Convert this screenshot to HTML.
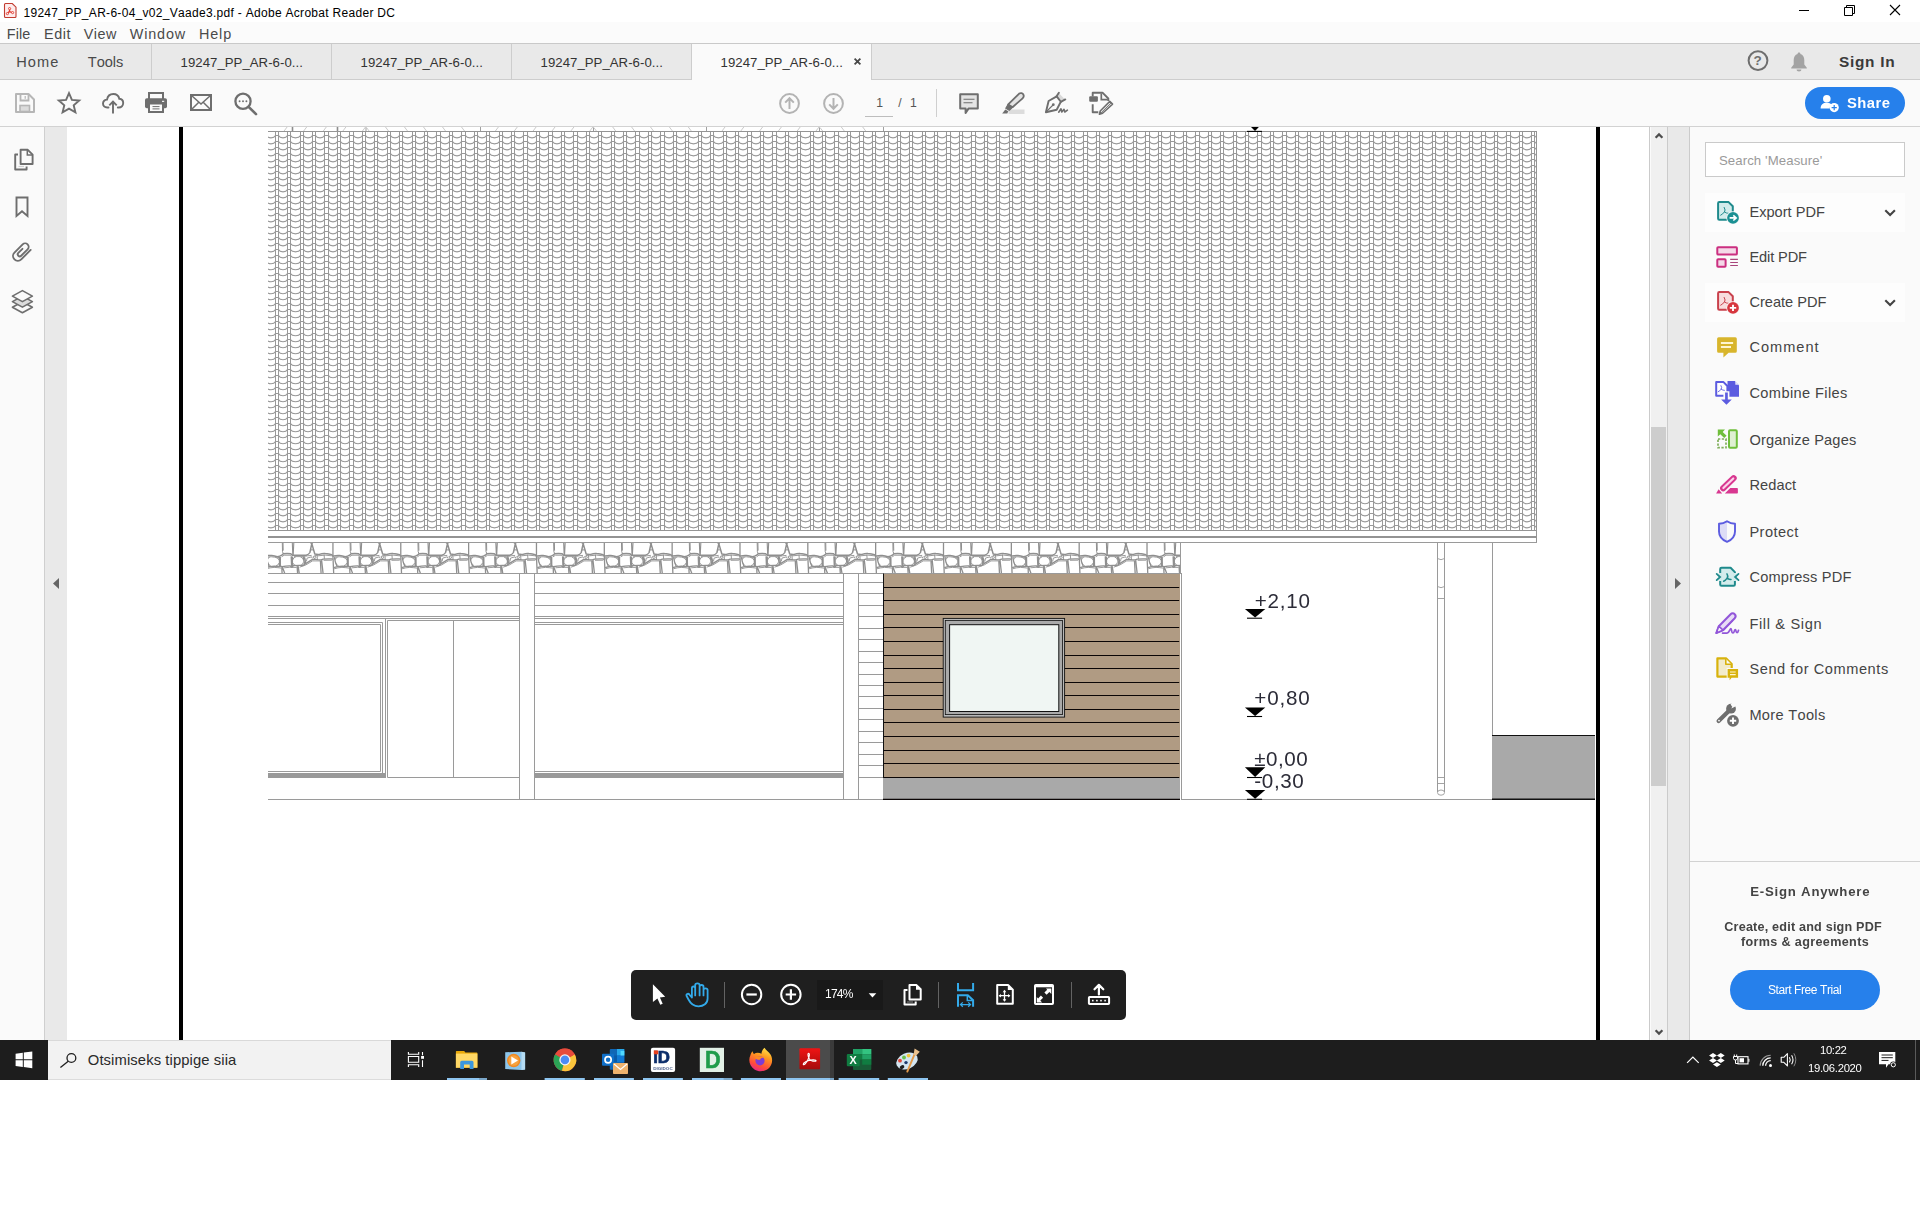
<!DOCTYPE html>
<html lang="en"><head><meta charset="utf-8"><title>19247_PP_AR-6-04_v02_Vaade3.pdf - Adobe Acrobat Reader DC</title><style>
html,body{margin:0;padding:0}
body{width:1920px;height:1210px;position:relative;overflow:hidden;background:#fff;font-family:"Liberation Sans", sans-serif;font-kerning:none}
.a{position:absolute;display:block}
.t{position:absolute;white-space:pre;line-height:1;display:block}
svg{overflow:visible}
</style></head><body>
<div class="a" style="left:0px;top:127px;width:44px;height:913px;background:#fafafa;"></div>
<div class="a" style="left:44px;top:127px;width:1px;height:913px;background:#cfcfcf;"></div>
<div class="a" style="left:45px;top:127px;width:22px;height:913px;background:#e9e9e9;"></div>
<div class="a" style="left:179px;top:127px;width:4px;height:913px;background:#000;"></div>
<div class="a" style="left:1596px;top:127px;width:4px;height:913px;background:#000;"></div>
<svg class="a" style="left:0;top:0" width="1920" height="1210" viewBox="0 0 1920 1210"><defs><g id="r49"><path d="M0 4.3h4M0 10.3h4M0 16.3h4M0 22.3h4M0 28.3h4M0 34.3h4M0 40.3h4M0 46.3h4M0 52.3h4M0 58.3h4M0 64.3h4M0 70.3h4M0 76.3h4M0 82.3h4M0 88.3h4M0 94.3h4M0 100.3h4M0 106.3h4M0 112.3h4M0 118.3h4M0 124.3h4M0 130.3h4M0 136.3h4M0 142.3h4M0 148.3h4M0 154.3h4M0 160.3h4M0 166.3h4M0 172.3h4M0 178.3h4M0 184.3h4M0 190.3h4M0 196.3h4M0 202.3h4M0 208.3h4M0 214.3h4M0 220.3h4M0 226.3h4M0 232.3h4M0 238.3h4M0 244.3h4M0 250.3h4M0 256.3h4M0 262.3h4M0 268.3h4M0 274.3h4M0 280.3h4M0 286.3h4M0 292.3h4M0 298.3h4M0 304.3h4M0 310.3h4M0 316.3h4M0 322.3h4M0 328.3h4M0 334.3h4M0 340.3h4M0 346.3h4M0 352.3h4M0 358.3h4M0 364.3h4M0 370.3h4M0 376.3h4M0 382.3h4M0 388.3h4M0 394.3h4"/><path stroke-width="1.05" d="M4 4.4c1.53 3 7.47 3 9 0M4 10.4c1.53 3 7.47 3 9 0M4 16.4c1.53 3 7.47 3 9 0M4 22.4c1.53 3 7.47 3 9 0M4 28.4c1.53 3 7.47 3 9 0M4 34.4c1.53 3 7.47 3 9 0M4 40.4c1.53 3 7.47 3 9 0M4 46.4c1.53 3 7.47 3 9 0M4 52.4c1.53 3 7.47 3 9 0M4 58.4c1.53 3 7.47 3 9 0M4 64.4c1.53 3 7.47 3 9 0M4 70.4c1.53 3 7.47 3 9 0M4 76.4c1.53 3 7.47 3 9 0M4 82.4c1.53 3 7.47 3 9 0M4 88.4c1.53 3 7.47 3 9 0M4 94.4c1.53 3 7.47 3 9 0M4 100.4c1.53 3 7.47 3 9 0M4 106.4c1.53 3 7.47 3 9 0M4 112.4c1.53 3 7.47 3 9 0M4 118.4c1.53 3 7.47 3 9 0M4 124.4c1.53 3 7.47 3 9 0M4 130.4c1.53 3 7.47 3 9 0M4 136.4c1.53 3 7.47 3 9 0M4 142.4c1.53 3 7.47 3 9 0M4 148.4c1.53 3 7.47 3 9 0M4 154.4c1.53 3 7.47 3 9 0M4 160.4c1.53 3 7.47 3 9 0M4 166.4c1.53 3 7.47 3 9 0M4 172.4c1.53 3 7.47 3 9 0M4 178.4c1.53 3 7.47 3 9 0M4 184.4c1.53 3 7.47 3 9 0M4 190.4c1.53 3 7.47 3 9 0M4 196.4c1.53 3 7.47 3 9 0M4 202.4c1.53 3 7.47 3 9 0M4 208.4c1.53 3 7.47 3 9 0M4 214.4c1.53 3 7.47 3 9 0M4 220.4c1.53 3 7.47 3 9 0M4 226.4c1.53 3 7.47 3 9 0M4 232.4c1.53 3 7.47 3 9 0M4 238.4c1.53 3 7.47 3 9 0M4 244.4c1.53 3 7.47 3 9 0M4 250.4c1.53 3 7.47 3 9 0M4 256.4c1.53 3 7.47 3 9 0M4 262.4c1.53 3 7.47 3 9 0M4 268.4c1.53 3 7.47 3 9 0M4 274.4c1.53 3 7.47 3 9 0M4 280.4c1.53 3 7.47 3 9 0M4 286.4c1.53 3 7.47 3 9 0M4 292.4c1.53 3 7.47 3 9 0M4 298.4c1.53 3 7.47 3 9 0M4 304.4c1.53 3 7.47 3 9 0M4 310.4c1.53 3 7.47 3 9 0M4 316.4c1.53 3 7.47 3 9 0M4 322.4c1.53 3 7.47 3 9 0M4 328.4c1.53 3 7.47 3 9 0M4 334.4c1.53 3 7.47 3 9 0M4 340.4c1.53 3 7.47 3 9 0M4 346.4c1.53 3 7.47 3 9 0M4 352.4c1.53 3 7.47 3 9 0M4 358.4c1.53 3 7.47 3 9 0M4 364.4c1.53 3 7.47 3 9 0M4 370.4c1.53 3 7.47 3 9 0M4 376.4c1.53 3 7.47 3 9 0M4 382.4c1.53 3 7.47 3 9 0M4 388.4c1.53 3 7.47 3 9 0M4 394.4c1.53 3 7.47 3 9 0"/></g><g id="r39"><path d="M0 4.3h3M0 10.3h3M0 16.3h3M0 22.3h3M0 28.3h3M0 34.3h3M0 40.3h3M0 46.3h3M0 52.3h3M0 58.3h3M0 64.3h3M0 70.3h3M0 76.3h3M0 82.3h3M0 88.3h3M0 94.3h3M0 100.3h3M0 106.3h3M0 112.3h3M0 118.3h3M0 124.3h3M0 130.3h3M0 136.3h3M0 142.3h3M0 148.3h3M0 154.3h3M0 160.3h3M0 166.3h3M0 172.3h3M0 178.3h3M0 184.3h3M0 190.3h3M0 196.3h3M0 202.3h3M0 208.3h3M0 214.3h3M0 220.3h3M0 226.3h3M0 232.3h3M0 238.3h3M0 244.3h3M0 250.3h3M0 256.3h3M0 262.3h3M0 268.3h3M0 274.3h3M0 280.3h3M0 286.3h3M0 292.3h3M0 298.3h3M0 304.3h3M0 310.3h3M0 316.3h3M0 322.3h3M0 328.3h3M0 334.3h3M0 340.3h3M0 346.3h3M0 352.3h3M0 358.3h3M0 364.3h3M0 370.3h3M0 376.3h3M0 382.3h3M0 388.3h3M0 394.3h3"/><path stroke-width="1.05" d="M3 4.4c1.53 3 7.47 3 9 0M3 10.4c1.53 3 7.47 3 9 0M3 16.4c1.53 3 7.47 3 9 0M3 22.4c1.53 3 7.47 3 9 0M3 28.4c1.53 3 7.47 3 9 0M3 34.4c1.53 3 7.47 3 9 0M3 40.4c1.53 3 7.47 3 9 0M3 46.4c1.53 3 7.47 3 9 0M3 52.4c1.53 3 7.47 3 9 0M3 58.4c1.53 3 7.47 3 9 0M3 64.4c1.53 3 7.47 3 9 0M3 70.4c1.53 3 7.47 3 9 0M3 76.4c1.53 3 7.47 3 9 0M3 82.4c1.53 3 7.47 3 9 0M3 88.4c1.53 3 7.47 3 9 0M3 94.4c1.53 3 7.47 3 9 0M3 100.4c1.53 3 7.47 3 9 0M3 106.4c1.53 3 7.47 3 9 0M3 112.4c1.53 3 7.47 3 9 0M3 118.4c1.53 3 7.47 3 9 0M3 124.4c1.53 3 7.47 3 9 0M3 130.4c1.53 3 7.47 3 9 0M3 136.4c1.53 3 7.47 3 9 0M3 142.4c1.53 3 7.47 3 9 0M3 148.4c1.53 3 7.47 3 9 0M3 154.4c1.53 3 7.47 3 9 0M3 160.4c1.53 3 7.47 3 9 0M3 166.4c1.53 3 7.47 3 9 0M3 172.4c1.53 3 7.47 3 9 0M3 178.4c1.53 3 7.47 3 9 0M3 184.4c1.53 3 7.47 3 9 0M3 190.4c1.53 3 7.47 3 9 0M3 196.4c1.53 3 7.47 3 9 0M3 202.4c1.53 3 7.47 3 9 0M3 208.4c1.53 3 7.47 3 9 0M3 214.4c1.53 3 7.47 3 9 0M3 220.4c1.53 3 7.47 3 9 0M3 226.4c1.53 3 7.47 3 9 0M3 232.4c1.53 3 7.47 3 9 0M3 238.4c1.53 3 7.47 3 9 0M3 244.4c1.53 3 7.47 3 9 0M3 250.4c1.53 3 7.47 3 9 0M3 256.4c1.53 3 7.47 3 9 0M3 262.4c1.53 3 7.47 3 9 0M3 268.4c1.53 3 7.47 3 9 0M3 274.4c1.53 3 7.47 3 9 0M3 280.4c1.53 3 7.47 3 9 0M3 286.4c1.53 3 7.47 3 9 0M3 292.4c1.53 3 7.47 3 9 0M3 298.4c1.53 3 7.47 3 9 0M3 304.4c1.53 3 7.47 3 9 0M3 310.4c1.53 3 7.47 3 9 0M3 316.4c1.53 3 7.47 3 9 0M3 322.4c1.53 3 7.47 3 9 0M3 328.4c1.53 3 7.47 3 9 0M3 334.4c1.53 3 7.47 3 9 0M3 340.4c1.53 3 7.47 3 9 0M3 346.4c1.53 3 7.47 3 9 0M3 352.4c1.53 3 7.47 3 9 0M3 358.4c1.53 3 7.47 3 9 0M3 364.4c1.53 3 7.47 3 9 0M3 370.4c1.53 3 7.47 3 9 0M3 376.4c1.53 3 7.47 3 9 0M3 382.4c1.53 3 7.47 3 9 0M3 388.4c1.53 3 7.47 3 9 0M3 394.4c1.53 3 7.47 3 9 0"/></g><g id="r310"><path d="M0 4.3h3M0 10.3h3M0 16.3h3M0 22.3h3M0 28.3h3M0 34.3h3M0 40.3h3M0 46.3h3M0 52.3h3M0 58.3h3M0 64.3h3M0 70.3h3M0 76.3h3M0 82.3h3M0 88.3h3M0 94.3h3M0 100.3h3M0 106.3h3M0 112.3h3M0 118.3h3M0 124.3h3M0 130.3h3M0 136.3h3M0 142.3h3M0 148.3h3M0 154.3h3M0 160.3h3M0 166.3h3M0 172.3h3M0 178.3h3M0 184.3h3M0 190.3h3M0 196.3h3M0 202.3h3M0 208.3h3M0 214.3h3M0 220.3h3M0 226.3h3M0 232.3h3M0 238.3h3M0 244.3h3M0 250.3h3M0 256.3h3M0 262.3h3M0 268.3h3M0 274.3h3M0 280.3h3M0 286.3h3M0 292.3h3M0 298.3h3M0 304.3h3M0 310.3h3M0 316.3h3M0 322.3h3M0 328.3h3M0 334.3h3M0 340.3h3M0 346.3h3M0 352.3h3M0 358.3h3M0 364.3h3M0 370.3h3M0 376.3h3M0 382.3h3M0 388.3h3M0 394.3h3"/><path stroke-width="1.05" d="M3 4.4c1.7 3 8.3 3 10 0M3 10.4c1.7 3 8.3 3 10 0M3 16.4c1.7 3 8.3 3 10 0M3 22.4c1.7 3 8.3 3 10 0M3 28.4c1.7 3 8.3 3 10 0M3 34.4c1.7 3 8.3 3 10 0M3 40.4c1.7 3 8.3 3 10 0M3 46.4c1.7 3 8.3 3 10 0M3 52.4c1.7 3 8.3 3 10 0M3 58.4c1.7 3 8.3 3 10 0M3 64.4c1.7 3 8.3 3 10 0M3 70.4c1.7 3 8.3 3 10 0M3 76.4c1.7 3 8.3 3 10 0M3 82.4c1.7 3 8.3 3 10 0M3 88.4c1.7 3 8.3 3 10 0M3 94.4c1.7 3 8.3 3 10 0M3 100.4c1.7 3 8.3 3 10 0M3 106.4c1.7 3 8.3 3 10 0M3 112.4c1.7 3 8.3 3 10 0M3 118.4c1.7 3 8.3 3 10 0M3 124.4c1.7 3 8.3 3 10 0M3 130.4c1.7 3 8.3 3 10 0M3 136.4c1.7 3 8.3 3 10 0M3 142.4c1.7 3 8.3 3 10 0M3 148.4c1.7 3 8.3 3 10 0M3 154.4c1.7 3 8.3 3 10 0M3 160.4c1.7 3 8.3 3 10 0M3 166.4c1.7 3 8.3 3 10 0M3 172.4c1.7 3 8.3 3 10 0M3 178.4c1.7 3 8.3 3 10 0M3 184.4c1.7 3 8.3 3 10 0M3 190.4c1.7 3 8.3 3 10 0M3 196.4c1.7 3 8.3 3 10 0M3 202.4c1.7 3 8.3 3 10 0M3 208.4c1.7 3 8.3 3 10 0M3 214.4c1.7 3 8.3 3 10 0M3 220.4c1.7 3 8.3 3 10 0M3 226.4c1.7 3 8.3 3 10 0M3 232.4c1.7 3 8.3 3 10 0M3 238.4c1.7 3 8.3 3 10 0M3 244.4c1.7 3 8.3 3 10 0M3 250.4c1.7 3 8.3 3 10 0M3 256.4c1.7 3 8.3 3 10 0M3 262.4c1.7 3 8.3 3 10 0M3 268.4c1.7 3 8.3 3 10 0M3 274.4c1.7 3 8.3 3 10 0M3 280.4c1.7 3 8.3 3 10 0M3 286.4c1.7 3 8.3 3 10 0M3 292.4c1.7 3 8.3 3 10 0M3 298.4c1.7 3 8.3 3 10 0M3 304.4c1.7 3 8.3 3 10 0M3 310.4c1.7 3 8.3 3 10 0M3 316.4c1.7 3 8.3 3 10 0M3 322.4c1.7 3 8.3 3 10 0M3 328.4c1.7 3 8.3 3 10 0M3 334.4c1.7 3 8.3 3 10 0M3 340.4c1.7 3 8.3 3 10 0M3 346.4c1.7 3 8.3 3 10 0M3 352.4c1.7 3 8.3 3 10 0M3 358.4c1.7 3 8.3 3 10 0M3 364.4c1.7 3 8.3 3 10 0M3 370.4c1.7 3 8.3 3 10 0M3 376.4c1.7 3 8.3 3 10 0M3 382.4c1.7 3 8.3 3 10 0M3 388.4c1.7 3 8.3 3 10 0M3 394.4c1.7 3 8.3 3 10 0"/></g><clipPath id="rclip"><rect x="268.0" y="130.7" width="1268.8" height="400.2"/></clipPath></defs>
<g clip-path="url(#rclip)" fill="none" stroke="#999" stroke-width="1">
<path d="M262.5 131.2v399.2M266.5 131.2v399.2M275.5 131.2v399.2M278.5 131.2v399.2M287.5 131.2v399.2M290.5 131.2v399.2M300.5 131.2v399.2M303.5 131.2v399.2M312.5 131.2v399.2M315.5 131.2v399.2M324.5 131.2v399.2M328.5 131.2v399.2M337.5 131.2v399.2M340.5 131.2v399.2M349.5 131.2v399.2M353.5 131.2v399.2M362.5 131.2v399.2M365.5 131.2v399.2M374.5 131.2v399.2M377.5 131.2v399.2M387.5 131.2v399.2M390.5 131.2v399.2M399.5 131.2v399.2M402.5 131.2v399.2M412.5 131.2v399.2M415.5 131.2v399.2M424.5 131.2v399.2M427.5 131.2v399.2M436.5 131.2v399.2M440.5 131.2v399.2M449.5 131.2v399.2M452.5 131.2v399.2M461.5 131.2v399.2M465.5 131.2v399.2M474.5 131.2v399.2M477.5 131.2v399.2M486.5 131.2v399.2M489.5 131.2v399.2M499.5 131.2v399.2M502.5 131.2v399.2M511.5 131.2v399.2M514.5 131.2v399.2M523.5 131.2v399.2M527.5 131.2v399.2M536.5 131.2v399.2M539.5 131.2v399.2M548.5 131.2v399.2M552.5 131.2v399.2M561.5 131.2v399.2M564.5 131.2v399.2M573.5 131.2v399.2M577.5 131.2v399.2M586.5 131.2v399.2M589.5 131.2v399.2M598.5 131.2v399.2M601.5 131.2v399.2M611.5 131.2v399.2M614.5 131.2v399.2M623.5 131.2v399.2M626.5 131.2v399.2M635.5 131.2v399.2M639.5 131.2v399.2M648.5 131.2v399.2M651.5 131.2v399.2M660.5 131.2v399.2M664.5 131.2v399.2M673.5 131.2v399.2M676.5 131.2v399.2M685.5 131.2v399.2M688.5 131.2v399.2M698.5 131.2v399.2M701.5 131.2v399.2M710.5 131.2v399.2M713.5 131.2v399.2M723.5 131.2v399.2M726.5 131.2v399.2M735.5 131.2v399.2M738.5 131.2v399.2M747.5 131.2v399.2M751.5 131.2v399.2M760.5 131.2v399.2M763.5 131.2v399.2M772.5 131.2v399.2M776.5 131.2v399.2M785.5 131.2v399.2M788.5 131.2v399.2M797.5 131.2v399.2M800.5 131.2v399.2M810.5 131.2v399.2M813.5 131.2v399.2M822.5 131.2v399.2M825.5 131.2v399.2M834.5 131.2v399.2M838.5 131.2v399.2M847.5 131.2v399.2M850.5 131.2v399.2M859.5 131.2v399.2M863.5 131.2v399.2M872.5 131.2v399.2M875.5 131.2v399.2M884.5 131.2v399.2M888.5 131.2v399.2M897.5 131.2v399.2M900.5 131.2v399.2M909.5 131.2v399.2M912.5 131.2v399.2M922.5 131.2v399.2M925.5 131.2v399.2M934.5 131.2v399.2M937.5 131.2v399.2M946.5 131.2v399.2M950.5 131.2v399.2M959.5 131.2v399.2M962.5 131.2v399.2M971.5 131.2v399.2M975.5 131.2v399.2M984.5 131.2v399.2M987.5 131.2v399.2M996.5 131.2v399.2M999.5 131.2v399.2M1009.5 131.2v399.2M1012.5 131.2v399.2M1021.5 131.2v399.2M1024.5 131.2v399.2M1034.5 131.2v399.2M1037.5 131.2v399.2M1046.5 131.2v399.2M1049.5 131.2v399.2M1058.5 131.2v399.2M1062.5 131.2v399.2M1071.5 131.2v399.2M1074.5 131.2v399.2M1083.5 131.2v399.2M1087.5 131.2v399.2M1096.5 131.2v399.2M1099.5 131.2v399.2M1108.5 131.2v399.2M1111.5 131.2v399.2M1121.5 131.2v399.2M1124.5 131.2v399.2M1133.5 131.2v399.2M1136.5 131.2v399.2M1145.5 131.2v399.2M1149.5 131.2v399.2M1158.5 131.2v399.2M1161.5 131.2v399.2M1170.5 131.2v399.2M1174.5 131.2v399.2M1183.5 131.2v399.2M1186.5 131.2v399.2M1195.5 131.2v399.2M1199.5 131.2v399.2M1208.5 131.2v399.2M1211.5 131.2v399.2M1220.5 131.2v399.2M1223.5 131.2v399.2M1233.5 131.2v399.2M1236.5 131.2v399.2M1245.5 131.2v399.2M1248.5 131.2v399.2M1257.5 131.2v399.2M1261.5 131.2v399.2M1270.5 131.2v399.2M1273.5 131.2v399.2M1282.5 131.2v399.2M1286.5 131.2v399.2M1295.5 131.2v399.2M1298.5 131.2v399.2M1307.5 131.2v399.2M1310.5 131.2v399.2M1320.5 131.2v399.2M1323.5 131.2v399.2M1332.5 131.2v399.2M1335.5 131.2v399.2M1345.5 131.2v399.2M1348.5 131.2v399.2M1357.5 131.2v399.2M1360.5 131.2v399.2M1369.5 131.2v399.2M1373.5 131.2v399.2M1382.5 131.2v399.2M1385.5 131.2v399.2M1394.5 131.2v399.2M1398.5 131.2v399.2M1407.5 131.2v399.2M1410.5 131.2v399.2M1419.5 131.2v399.2M1422.5 131.2v399.2M1432.5 131.2v399.2M1435.5 131.2v399.2M1444.5 131.2v399.2M1447.5 131.2v399.2M1456.5 131.2v399.2M1460.5 131.2v399.2M1469.5 131.2v399.2M1472.5 131.2v399.2M1481.5 131.2v399.2M1485.5 131.2v399.2M1494.5 131.2v399.2M1497.5 131.2v399.2M1506.5 131.2v399.2M1510.5 131.2v399.2M1519.5 131.2v399.2M1522.5 131.2v399.2M1531.5 131.2v399.2M1534.5 131.2v399.2"/>
<use href="#r49" x="262.5" y="131.2"/>
<use href="#r39" x="275.5" y="131.2"/>
<use href="#r310" x="287.5" y="131.2"/>
<use href="#r39" x="300.5" y="131.2"/>
<use href="#r39" x="312.5" y="131.2"/>
<use href="#r49" x="324.5" y="131.2"/>
<use href="#r39" x="337.5" y="131.2"/>
<use href="#r49" x="349.5" y="131.2"/>
<use href="#r39" x="362.5" y="131.2"/>
<use href="#r310" x="374.5" y="131.2"/>
<use href="#r39" x="387.5" y="131.2"/>
<use href="#r310" x="399.5" y="131.2"/>
<use href="#r39" x="412.5" y="131.2"/>
<use href="#r39" x="424.5" y="131.2"/>
<use href="#r49" x="436.5" y="131.2"/>
<use href="#r39" x="449.5" y="131.2"/>
<use href="#r49" x="461.5" y="131.2"/>
<use href="#r39" x="474.5" y="131.2"/>
<use href="#r310" x="486.5" y="131.2"/>
<use href="#r39" x="499.5" y="131.2"/>
<use href="#r39" x="511.5" y="131.2"/>
<use href="#r49" x="523.5" y="131.2"/>
<use href="#r39" x="536.5" y="131.2"/>
<use href="#r49" x="548.5" y="131.2"/>
<use href="#r39" x="561.5" y="131.2"/>
<use href="#r49" x="573.5" y="131.2"/>
<use href="#r39" x="586.5" y="131.2"/>
<use href="#r310" x="598.5" y="131.2"/>
<use href="#r39" x="611.5" y="131.2"/>
<use href="#r39" x="623.5" y="131.2"/>
<use href="#r49" x="635.5" y="131.2"/>
<use href="#r39" x="648.5" y="131.2"/>
<use href="#r49" x="660.5" y="131.2"/>
<use href="#r39" x="673.5" y="131.2"/>
<use href="#r310" x="685.5" y="131.2"/>
<use href="#r39" x="698.5" y="131.2"/>
<use href="#r310" x="710.5" y="131.2"/>
<use href="#r39" x="723.5" y="131.2"/>
<use href="#r39" x="735.5" y="131.2"/>
<use href="#r49" x="747.5" y="131.2"/>
<use href="#r39" x="760.5" y="131.2"/>
<use href="#r49" x="772.5" y="131.2"/>
<use href="#r39" x="785.5" y="131.2"/>
<use href="#r310" x="797.5" y="131.2"/>
<use href="#r39" x="810.5" y="131.2"/>
<use href="#r39" x="822.5" y="131.2"/>
<use href="#r49" x="834.5" y="131.2"/>
<use href="#r39" x="847.5" y="131.2"/>
<use href="#r49" x="859.5" y="131.2"/>
<use href="#r39" x="872.5" y="131.2"/>
<use href="#r49" x="884.5" y="131.2"/>
<use href="#r39" x="897.5" y="131.2"/>
<use href="#r310" x="909.5" y="131.2"/>
<use href="#r39" x="922.5" y="131.2"/>
<use href="#r39" x="934.5" y="131.2"/>
<use href="#r49" x="946.5" y="131.2"/>
<use href="#r39" x="959.5" y="131.2"/>
<use href="#r49" x="971.5" y="131.2"/>
<use href="#r39" x="984.5" y="131.2"/>
<use href="#r310" x="996.5" y="131.2"/>
<use href="#r39" x="1009.5" y="131.2"/>
<use href="#r310" x="1021.5" y="131.2"/>
<use href="#r39" x="1034.5" y="131.2"/>
<use href="#r39" x="1046.5" y="131.2"/>
<use href="#r49" x="1058.5" y="131.2"/>
<use href="#r39" x="1071.5" y="131.2"/>
<use href="#r49" x="1083.5" y="131.2"/>
<use href="#r39" x="1096.5" y="131.2"/>
<use href="#r310" x="1108.5" y="131.2"/>
<use href="#r39" x="1121.5" y="131.2"/>
<use href="#r39" x="1133.5" y="131.2"/>
<use href="#r49" x="1145.5" y="131.2"/>
<use href="#r39" x="1158.5" y="131.2"/>
<use href="#r49" x="1170.5" y="131.2"/>
<use href="#r39" x="1183.5" y="131.2"/>
<use href="#r49" x="1195.5" y="131.2"/>
<use href="#r39" x="1208.5" y="131.2"/>
<use href="#r310" x="1220.5" y="131.2"/>
<use href="#r39" x="1233.5" y="131.2"/>
<use href="#r39" x="1245.5" y="131.2"/>
<use href="#r49" x="1257.5" y="131.2"/>
<use href="#r39" x="1270.5" y="131.2"/>
<use href="#r49" x="1282.5" y="131.2"/>
<use href="#r39" x="1295.5" y="131.2"/>
<use href="#r310" x="1307.5" y="131.2"/>
<use href="#r39" x="1320.5" y="131.2"/>
<use href="#r310" x="1332.5" y="131.2"/>
<use href="#r39" x="1345.5" y="131.2"/>
<use href="#r39" x="1357.5" y="131.2"/>
<use href="#r49" x="1369.5" y="131.2"/>
<use href="#r39" x="1382.5" y="131.2"/>
<use href="#r49" x="1394.5" y="131.2"/>
<use href="#r39" x="1407.5" y="131.2"/>
<use href="#r310" x="1419.5" y="131.2"/>
<use href="#r39" x="1432.5" y="131.2"/>
<use href="#r39" x="1444.5" y="131.2"/>
<use href="#r49" x="1456.5" y="131.2"/>
<use href="#r39" x="1469.5" y="131.2"/>
<use href="#r49" x="1481.5" y="131.2"/>
<use href="#r39" x="1494.5" y="131.2"/>
<use href="#r49" x="1506.5" y="131.2"/>
<use href="#r39" x="1519.5" y="131.2"/>
<use href="#r39" x="1531.5" y="131.2"/>
</g>
<path d="M268.0 131.500H1537M1536.500 131.500V542.500M268.0 530.500H1536.500" fill="none" stroke="#949494" stroke-width="1"/><defs><g id="st"><path d="M0 0V13.700L0.750 31"/><path d="M0 13.700L0.900 13.300Q3.500 12.700 6.600 12.900Q9.500 13.200 12.200 14.100Q15 13.800 16.700 12.600L18.200 11.100Q22 10.700 25.700 11.100L27.200 12.600H41.100Q43.800 11.800 44.800 9.900L46.700 1L49.700 11.400Q52 12 54.200 11.800Q57.500 10.600 60.200 10.900Q64 11.200 66.600 12L67.700 13.700" stroke-width="1.5"/><path d="M1 15Q3.500 14 6.600 14.200Q9.500 14.400 12.200 15.300L14.600 14.500M16.500 14.300L19 12.600H25.500L26.300 13.800M28.800 14H38Q40.500 13.800 42.500 13.200L46.500 12.800M49.500 12.900L53 13.200L60 12.500L66.500 13.200" stroke-width="0.9"/><path d="M17.200 0L17.400 9L18.200 11.100M17.900 0L18.100 8" stroke-width="1"/><path d="M27.200 0L27.700 12.600M28.700 0L28.100 12.600" stroke-width="1.1"/><path d="M45.500 7.300H48.600M45 0.300L46.700 1L48 0.300" stroke-width="1"/><path d="M1.500 15Q2 19 4 23.600M14.300 14.500L14.500 23.500M15.200 14.300L15.300 23.500M26.100 13.800L26.500 24M27.300 13.800L27.300 23.500M38.200 14L39.300 22M39.300 14.500Q40.500 17 40.300 20.500"/><path d="M2.500 17Q2.300 15 4.500 14.900M11.500 15.200Q13.700 15.300 13.700 17.500M13.700 20.500Q13.500 23 11 23M5.500 23Q3 22.500 2.700 20M28 17Q28 14.700 30.500 14.600M35.500 14.600Q38 14.800 38 17M38 20Q37.800 22.600 35.500 22.700M30.500 22.700Q28.200 22.500 28 20.500" stroke-width="0.9"/><path d="M0.800 25L4.500 24Q9 23.400 13 23.900L15.600 23.600L17 24.200Q21 23.200 25 23.300L26.800 24.600L28.500 23Q33 22.600 38 22.900L40.500 21L47 17Q50 16.600 52.700 17L56 17.300L58 16.500Q62 16.100 66.500 16.300L67.700 16.800" stroke-width="1.4"/><path d="M1.200 26.200Q5 25 9 24.800Q13 25 16.200 25.500M19 25.200Q24 24.400 31.500 24.800M34.500 24.600L40.800 22.300L47.500 18.300L55 18.300M58.500 17.700L66.800 17.600" stroke-width="0.9"/><path d="M41.300 18.800L42 15.500L46.500 14.200L47.300 16M52 12.500L52.300 16.800M59 12L59.300 16.300M48.200 13.800Q50 13 51 14.500Q50.500 16.300 48.800 15.800Z" stroke-width="0.9"/><path d="M16.700 24.500L17 31M17.300 24.500L19.700 31M32 23.500L32.500 31M33 23.500L34.200 31M55.300 17.800L56 31M56.500 17.500L58 31"/></g><clipPath id="sclip"><rect x="268" y="542.6" width="912.500" height="31"/></clipPath></defs>
<g clip-path="url(#sclip)" fill="none" stroke="#8f8f8f" stroke-width="1.300" stroke-linejoin="round">
<use href="#st" x="265.1" y="542.6"/>
<use href="#st" x="332.94" y="542.6"/>
<use href="#st" x="400.78" y="542.6"/>
<use href="#st" x="468.62" y="542.6"/>
<use href="#st" x="536.46" y="542.6"/>
<use href="#st" x="604.3" y="542.6"/>
<use href="#st" x="672.14" y="542.6"/>
<use href="#st" x="739.98" y="542.6"/>
<use href="#st" x="807.82" y="542.6"/>
<use href="#st" x="875.66" y="542.6"/>
<use href="#st" x="943.5" y="542.6"/>
<use href="#st" x="1011.34" y="542.6"/>
<use href="#st" x="1079.18" y="542.6"/>
<use href="#st" x="1147.02" y="542.6"/>
</g><rect x="268" y="536" width="1268.8" height="2" fill="#939393"/>
<path d="M268 542.5H1537" fill="none" stroke="#9a9a9a" stroke-width="1"/>
<path d="M268 573.500H1182" fill="none" stroke="#9a9a9a" stroke-width="1"/>
<path d="M1180.500 542.500V573.500M1181.500 573V799.500" fill="none" stroke="#9a9a9a" stroke-width="1"/>
<path d="M268 582.5H519.5" fill="none" stroke="#9a9a9a" stroke-width="1"/>
<path d="M268 593.5H519.5" fill="none" stroke="#9a9a9a" stroke-width="1"/>
<path d="M268 605.5H519.5" fill="none" stroke="#9a9a9a" stroke-width="1"/>
<path d="M268 616.5H519.5" fill="none" stroke="#9a9a9a" stroke-width="1"/>
<path d="M268 618.5H519.5" fill="none" stroke="#9a9a9a" stroke-width="1"/>
<path d="M268 622.5H382.5V773" fill="none" stroke="#9a9a9a" stroke-width="1"/>
<path d="M268 624.5H380.5V771.5H268" fill="none" stroke="#9a9a9a" stroke-width="1"/>
<path d="M385.5 618.5V778" fill="none" stroke="#9a9a9a" stroke-width="1"/>
<rect x="268" y="773" width="118" height="5" fill="#999"/>
<path d="M387.5 777.5V620.5H519.5" fill="none" stroke="#9a9a9a" stroke-width="1"/>
<path d="M453.5 620.5V777.5" fill="none" stroke="#9a9a9a" stroke-width="1"/>
<path d="M387.5 777.5H519.5" fill="none" stroke="#9a9a9a" stroke-width="1"/>
<path d="M519.5 573.5V799.5M534.5 573.5V799.5" fill="none" stroke="#9a9a9a" stroke-width="1"/>
<path d="M534.5 582.5H843.5" fill="none" stroke="#9a9a9a" stroke-width="1"/>
<path d="M534.5 593.5H843.5" fill="none" stroke="#9a9a9a" stroke-width="1"/>
<path d="M534.5 605.5H843.5" fill="none" stroke="#9a9a9a" stroke-width="1"/>
<path d="M534.5 616.5H843.5" fill="none" stroke="#9a9a9a" stroke-width="1"/>
<path d="M534.5 618.5H843.5" fill="none" stroke="#9a9a9a" stroke-width="1"/>
<path d="M534.5 622.5H843.5" fill="none" stroke="#9a9a9a" stroke-width="1"/>
<path d="M534.5 624.5H843.5" fill="none" stroke="#9a9a9a" stroke-width="1"/>
<path d="M534.5 771.5H843.5" fill="none" stroke="#9a9a9a" stroke-width="1"/>
<rect x="534.5" y="773" width="309" height="5" fill="#999"/>
<path d="M843.5 573.5V799.5M858.5 573.5V799.5" fill="none" stroke="#9a9a9a" stroke-width="1"/>
<path d="M858.5 582.5H883" fill="none" stroke="#9a9a9a" stroke-width="1"/>
<path d="M858.5 593.5H883" fill="none" stroke="#9a9a9a" stroke-width="1"/>
<path d="M858.5 605.5H883" fill="none" stroke="#9a9a9a" stroke-width="1"/>
<path d="M858.5 616.5H883" fill="none" stroke="#9a9a9a" stroke-width="1"/>
<path d="M858.5 628.5H883" fill="none" stroke="#9a9a9a" stroke-width="1"/>
<path d="M858.5 639.5H883" fill="none" stroke="#9a9a9a" stroke-width="1"/>
<path d="M858.5 651.5H883" fill="none" stroke="#9a9a9a" stroke-width="1"/>
<path d="M858.5 662.5H883" fill="none" stroke="#9a9a9a" stroke-width="1"/>
<path d="M858.5 674.5H883" fill="none" stroke="#9a9a9a" stroke-width="1"/>
<path d="M858.5 685.5H883" fill="none" stroke="#9a9a9a" stroke-width="1"/>
<path d="M858.5 696.5H883" fill="none" stroke="#9a9a9a" stroke-width="1"/>
<path d="M858.5 708.5H883" fill="none" stroke="#9a9a9a" stroke-width="1"/>
<path d="M858.5 719.5H883" fill="none" stroke="#9a9a9a" stroke-width="1"/>
<path d="M858.5 731.5H883" fill="none" stroke="#9a9a9a" stroke-width="1"/>
<path d="M858.5 742.5H883" fill="none" stroke="#9a9a9a" stroke-width="1"/>
<path d="M858.5 754.5H883" fill="none" stroke="#9a9a9a" stroke-width="1"/>
<path d="M858.5 765.5H883" fill="none" stroke="#9a9a9a" stroke-width="1"/>
<path d="M858.5 777.5H883" fill="none" stroke="#9a9a9a" stroke-width="1"/>
<rect x="883" y="574" width="297" height="204" fill="#b09b83"/>
<path d="M883.4 587.5H1179.200M883.4 600.5H1179.200M883.4 614.5H1179.200M883.4 627.5H1179.200M883.4 641.5H1179.200M883.4 655.5H1179.200M883.4 668.5H1179.200M883.4 682.5H1179.200M883.4 695.5H1179.200M883.4 709.5H1179.200M883.4 722.5H1179.200M883.4 736.5H1179.200M883.4 750.5H1179.200M883.4 763.5H1179.200M883.4 777.5H1179.200" stroke="#0b0606" stroke-width="1" fill="none"/>
<path d="M883.5 573.5V799.5" stroke="#111" stroke-width="1" fill="none"/>
<rect x="883" y="778" width="297" height="21.200" fill="#a9a9a9"/>
<path d="M883 799.400H1180" stroke="#0b0606" stroke-width="1.300" fill="none"/>
<rect x="943.2" y="618.4" width="121.4" height="98.700" fill="#b8b8b8" stroke="#111" stroke-width="0.900"/>
<rect x="945.3" y="620.4" width="117.2" height="94.200" fill="#aaa" stroke="#111" stroke-width="0.800"/>
<rect x="949.6" y="624.7" width="109.2" height="86.8" fill="#f0f6f3" stroke="#111" stroke-width="1"/>
<path d="M268 799.5H883" fill="none" stroke="#9a9a9a" stroke-width="1"/>
<path d="M1181 799.500H1492" fill="none" stroke="#9a9a9a" stroke-width="1"/>
<path d="M1437.5 542.5V792M1444.5 542.5V792" fill="none" stroke="#9a9a9a" stroke-width="1"/>
<path d="M1437.5 558.5q3.5 2.4 7 0M1437.5 586.5q3.5 2.4 7 0M1437.5 598.5h7M1437.5 777.5h7M1437.5 783.5h7" fill="none" stroke="#9a9a9a" stroke-width="0.9"/>
<ellipse cx="1441" cy="792.6" rx="3.5" ry="2.6" fill="none" stroke="#9a9a9a" stroke-width="0.9"/>
<path d="M1492.5 542.5V735" fill="none" stroke="#9a9a9a" stroke-width="1"/>
<rect x="1492" y="735.4" width="103" height="63.8" fill="#a9a9a9"/>
<path d="M1492 735.5H1595" stroke="#111" stroke-width="1.100" fill="none"/><path d="M1492 799.300H1595" stroke="#111" stroke-width="1.500" fill="none"/>
<path d="M362.5 131L365.5 127M342.9 131L345.9 127M323.3 131L326.3 127M303.7 131L306.7 127M284.1 131L287.1 127M366.5 127.500L369.1 131M385.5 127L388.5 131M404.5 127L407.5 131M423.5 127L426.5 131M442.5 127L445.5 131M461.5 127L464.5 131M589.8 131L592.8 127M570.9 131L573.9 127M552.0 131L555.0 127M533.1 131L536.1 127M514.3 131L517.3 127M495.4 131L498.4 127M593.8 127.500L596.4 131M612.7 127L615.7 131M631.6 127L634.6 131M650.5 127L653.5 131M669.4 127L672.4 131M688.3 127L691.3 131M816.0 131L819.0 127M797.2 131L800.2 127M778.4 131L781.4 127M759.6 131L762.6 127M740.8 131L743.8 127M722.0 131L725.0 127M820.0 127.500L822.6 131M841.3 127L844.3 131M862.7 127L865.7 131" fill="none" stroke="#bdbdbd" stroke-width="0.8"/>
<path d="M480.500 127v4M706.500 127v4M883.500 127v4M366 127.500v3.500M593.500 127.500v3.500M819.500 127.500v3.500" fill="none" stroke="#a0a0a0" stroke-width="1"/>
<path d="M292.500 127v4M337.500 127v4" fill="none" stroke="#8c8c8c" stroke-width="1.6"/><path d="M1244.9 609.1H1265.3L1255.1 617.6Z" fill="#000"/>
<path d="M1247 618.2H1262.1" stroke="#000" stroke-width="1.1" fill="none"/>
<path d="M1244.9 707.4H1265.3L1255.1 715.9Z" fill="#000"/>
<path d="M1247 716.5H1262.1" stroke="#000" stroke-width="1.1" fill="none"/>
<path d="M1244.9 767.3H1265.3L1255.1 776.9Z" fill="#000"/>
<path d="M1247 777.5H1262.1" stroke="#000" stroke-width="1.1" fill="none"/>
<path d="M1244.9 790.1H1265.3L1255.1 798.6999999999999Z" fill="#000"/>
<path d="M1247 799.3H1262.1" stroke="#000" stroke-width="1.1" fill="none"/>
<path d="M1251 127H1258.9L1255 131Z" fill="#000"/><path d="M1247 131.4H1262" stroke="#000" stroke-width="1.1"/></svg>
<div class="a" style="left:1649px;top:127px;width:1px;height:913px;background:#cbcbcb;"></div>
<div class="a" style="left:1650px;top:127px;width:1px;height:913px;background:#fbfbfb;"></div>
<div class="a" style="left:1651px;top:127px;width:16px;height:913px;background:#f0f0f0;"></div>
<div class="a" style="left:1651px;top:427px;width:15px;height:358.5px;background:#cdcdcd;"></div>
<div class="a" style="left:1667px;top:127px;width:1px;height:913px;background:#cbcbcb;"></div>
<div class="a" style="left:1668px;top:127px;width:21px;height:913px;background:#e9e9e9;"></div>
<div class="a" style="left:1689px;top:127px;width:1px;height:913px;background:#cbcbcb;"></div>
<div class="a" style="left:1690px;top:127px;width:230px;height:913px;background:#fafafa;"></div>
<svg class="a" style="left:1653.7px;top:131.5px" width="10" height="8" viewBox="0 0 10 8" ><path d="M1.600 5.800L5 2.400L8.400 5.800" fill="none" stroke="#4d4d4d" stroke-width="2.200"/></svg><svg class="a" style="left:1653.5px;top:1028.5px" width="10" height="7" viewBox="0 0 10 7" ><path d="M1.600 1.200L5 4.600L8.400 1.200" fill="none" stroke="#4d4d4d" stroke-width="2.200"/></svg><svg class="a" style="left:53px;top:578px" width="6" height="11" viewBox="0 0 6 11" ><path d="M6 0L0 5.500L6 11Z" fill="#656565"/></svg><svg class="a" style="left:1675px;top:578px" width="6" height="11" viewBox="0 0 6 11" ><path d="M0 0L6 5.500L0 11Z" fill="#656565"/></svg>
<div class="a" style="left:1705px;top:193px;width:200px;height:39px;background:#fdfdfd;"></div>
<div class="a" style="left:1705px;top:283px;width:200px;height:39px;background:#fdfdfd;"></div>
<div class="a" style="left:0px;top:0px;width:1920px;height:22px;background:#fff;"></div>
<div class="a" style="left:0px;top:22px;width:1920px;height:21px;background:#fbfbfb;"></div>
<div class="a" style="left:0px;top:43px;width:1920px;height:1px;background:#c9c9c9;"></div>
<div class="a" style="left:0px;top:44px;width:1920px;height:35px;background:#e9e9e9;"></div>
<div class="a" style="left:0px;top:79px;width:1920px;height:1px;background:#cdcdcd;"></div>
<div class="a" style="left:0px;top:80px;width:1920px;height:46px;background:#fafafa;"></div>
<div class="a" style="left:0px;top:126px;width:1920px;height:1px;background:#d2d2d2;"></div>
<div class="a" style="left:151px;top:44px;width:1px;height:35px;background:#cdcdcd;"></div>
<div class="a" style="left:331px;top:44px;width:1px;height:35px;background:#cdcdcd;"></div>
<div class="a" style="left:511px;top:44px;width:1px;height:35px;background:#cdcdcd;"></div>
<div class="a" style="left:691px;top:44px;width:1px;height:35px;background:#cdcdcd;"></div>
<div class="a" style="left:871px;top:44px;width:1px;height:35px;background:#cdcdcd;"></div>
<div class="a" style="left:692px;top:44px;width:179px;height:36px;background:#fafafa;"></div>
<svg class="a" style="left:4px;top:3px" width="13" height="15" viewBox="0 0 13 15" ><path d="M1.5 0.5H8.3L12 4.2V13.5Q12 14.5 11 14.5H1.5Q0.5 14.5 0.5 13.5V1.5Q0.5 0.5 1.5 0.5Z" fill="#fdecec" stroke="#c23b30" stroke-width="1.1"/><g fill="none" stroke="#e03a2f" stroke-width="0.9"><circle cx="5.6" cy="5.6" r="1.1"/><circle cx="3.4" cy="10.6" r="1.1"/><circle cx="8.6" cy="9.6" r="1.1"/><path d="M5.6 6.7L5.4 8.6L4 9.8M5.4 8.6L7.6 9.3" stroke-width="1.3"/></g></svg>
<span class="t" style="left:23.44px;top:6.74px;font-size:12px;color:#000;letter-spacing:0.297px;">19247_PP_AR-6-04_v02_Vaade3.pdf - Adobe Acrobat Reader DC</span>
<svg class="a" style="left:1799px;top:5px" width="102" height="11" viewBox="0 0 102 11" ><path d="M0 5.5H10" stroke="#000" stroke-width="1" fill="none"/><path d="M45.5 2.5H53.5V10.5H45.5ZM47.5 2.5V0.5H55.5V8.5H53.5" stroke="#000" stroke-width="1" fill="none"/><path d="M91 0L101 10M101 0L91 10" stroke="#000" stroke-width="1.1" fill="none"/></svg>
<span class="t" style="left:6.83px;top:26.51px;font-size:14.4px;color:#4a4a4a;letter-spacing:0.111px;">File</span>
<span class="t" style="left:44.08px;top:26.51px;font-size:14.4px;color:#4a4a4a;letter-spacing:0.525px;">Edit</span>
<span class="t" style="left:83.73px;top:26.51px;font-size:14.4px;color:#4a4a4a;letter-spacing:0.481px;">View</span>
<span class="t" style="left:129.73px;top:26.51px;font-size:14.4px;color:#4a4a4a;letter-spacing:0.845px;">Window</span>
<span class="t" style="left:199.08px;top:26.51px;font-size:14.4px;color:#4a4a4a;letter-spacing:0.825px;">Help</span>
<span class="t" style="left:16.22px;top:54.54px;font-size:14.6px;color:#4a4a4a;letter-spacing:1.101px;">Home</span>
<span class="t" style="left:87.82px;top:54.54px;font-size:14.6px;color:#4a4a4a;letter-spacing:-0.059px;">Tools</span>
<span class="t" style="left:180.58px;top:55.73px;font-size:13.2px;color:#333;letter-spacing:0.031px;">19247_PP_AR-6-0...</span>
<span class="t" style="left:360.58px;top:55.73px;font-size:13.2px;color:#333;letter-spacing:0.031px;">19247_PP_AR-6-0...</span>
<span class="t" style="left:540.58px;top:55.73px;font-size:13.2px;color:#333;letter-spacing:0.031px;">19247_PP_AR-6-0...</span>
<span class="t" style="left:720.58px;top:55.73px;font-size:13.2px;color:#333;letter-spacing:0.031px;">19247_PP_AR-6-0...</span>
<svg class="a" style="left:854.3px;top:58.2px" width="7" height="7" viewBox="0 0 7 7" ><path d="M0.600 0.600L6.400 6.400M6.400 0.600L0.600 6.400" stroke="#484848" stroke-width="1.800" fill="none"/></svg>
<div class="a" style="left:1805px;top:87px;width:100px;height:32px;border-radius:16px;background:#2680eb"></div>
<svg class="a" style="left:15px;top:93px" width="20" height="20" viewBox="0 0 20 20" ><path d="M1 1H13.5L19 6.5V19H1Z" fill="none" stroke="#b6b6b6" stroke-width="2" stroke-linejoin="round"/><path d="M5.5 1.5V7.5H13.5V1.5" fill="none" stroke="#b6b6b6" stroke-width="1.8"/><rect x="9.6" y="3" width="1.2" height="2.8" fill="#b6b6b6"/><rect x="5" y="12.5" width="9.5" height="6" fill="#dcdcdc" stroke="#b6b6b6" stroke-width="1.6"/></svg><svg class="a" style="left:57px;top:91px" width="24" height="23" viewBox="0 0 24 23" ><path d="M12 2.2L14.9 8.9L22.2 9.5L16.7 14.3L18.4 21.4L12 17.6L5.6 21.4L7.3 14.3L1.8 9.5L9.1 8.9Z" fill="none" stroke="#6e6e6e" stroke-width="1.9" stroke-linejoin="miter"/></svg><svg class="a" style="left:101px;top:92px" width="24" height="23" viewBox="0 0 24 23" ><path d="M7.5 15.5H6.2C3.6 15.5 2 13.6 2 11.5C2 9.2 3.8 7.6 6 7.6C6.6 4.4 9 2 12.3 2C15.4 2 17.7 4 18.3 6.8C20.6 7 22.2 8.8 22.2 11.1C22.2 13.6 20.3 15.5 17.8 15.5H16.8" fill="none" stroke="#6e6e6e" stroke-width="1.9" stroke-linecap="round"/><path d="M12 21.5V10.2M8.3 13.4L12 9.6L15.7 13.4" fill="none" stroke="#6e6e6e" stroke-width="1.9"/></svg><svg class="a" style="left:145px;top:92px" width="22" height="21" viewBox="0 0 22 21" ><rect x="4" y="1" width="14" height="7" fill="#fafafa" stroke="#6e6e6e" stroke-width="2"/><rect x="0" y="6.3" width="22" height="10" rx="1.8" fill="#6e6e6e"/><rect x="17" y="8.8" width="2.2" height="1.1" fill="#fafafa"/><rect x="4" y="11.5" width="14" height="8.5" fill="#fafafa" stroke="#6e6e6e" stroke-width="2"/><path d="M7.5 14.6H14.5M7.5 16.9H14.5" stroke="#6e6e6e" stroke-width="1"/></svg><svg class="a" style="left:190px;top:94px" width="22" height="17" viewBox="0 0 22 17" ><rect x="1" y="1" width="20" height="15" fill="none" stroke="#6e6e6e" stroke-width="2"/><path d="M1.5 1.5L11 10L20.500 1.5M1.5 15.5L8.8 8.2M20.5 15.5L13.2 8.2" fill="none" stroke="#6e6e6e" stroke-width="1.5"/></svg><svg class="a" style="left:233px;top:91px" width="25" height="25" viewBox="0 0 25 25" ><circle cx="10" cy="10.2" r="7.6" fill="none" stroke="#6e6e6e" stroke-width="2.3"/><path d="M15.6 15.8L23 23.2" stroke="#6e6e6e" stroke-width="2.6" stroke-linecap="round"/><circle cx="6.6" cy="10.2" r="0.95" fill="#6e6e6e"/><circle cx="10" cy="10.2" r="0.95" fill="#6e6e6e"/><circle cx="13.4" cy="10.2" r="0.95" fill="#6e6e6e"/></svg><svg class="a" style="left:778.7px;top:92.5px" width="21" height="21" viewBox="0 0 21 21" ><circle cx="10.5" cy="10.5" r="9.4" fill="none" stroke="#b3b3b3" stroke-width="2"/><path d="M10.5 16V5.6M6.2 9.6L10.5 5.2L14.8 9.600" fill="none" stroke="#b3b3b3" stroke-width="2"/></svg><svg class="a" style="left:822.5px;top:92.5px" width="21" height="21" viewBox="0 0 21 21" ><circle cx="10.5" cy="10.5" r="9.4" fill="none" stroke="#b3b3b3" stroke-width="2"/><path d="M10.5 5V15.400M6.2 11.4L10.5 15.8L14.8 11.4" fill="none" stroke="#b3b3b3" stroke-width="2"/></svg><svg class="a" style="left:959px;top:93px" width="20" height="21" viewBox="0 0 20 21" ><path d="M1.2 1.200H18.8V15.6H9.5L6.6 20V15.6H1.2Z" fill="#e4e4e4" stroke="#6e6e6e" stroke-width="2" stroke-linejoin="round"/><path d="M4.5 6.3H15.5M4.5 9.800H13.5" stroke="#6e6e6e" stroke-width="1.1"/></svg><svg class="a" style="left:1001px;top:92px" width="24" height="22" viewBox="0 0 24 22" ><rect x="7.5" y="17.5" width="16" height="4.5" fill="#dcdcdc"/><path d="M18.2 1.6C19.6 0.7 21.4 1 22.2 2.3C23 3.6 22.700 5.300 21.6 6.3L11.5 15.2L7.2 12.400Z" fill="#e4e4e4" stroke="#6e6e6e" stroke-width="1.8" stroke-linejoin="round"/><path d="M7.2 12.400L11.5 15.200L8.300 18.200L4.800 16.200Z" fill="#6e6e6e" stroke="#6e6e6e" stroke-width="1.2" stroke-linejoin="round"/><path d="M4.300 17.400L7.300 19.200L6.300 21.400H1.2Z" fill="#6e6e6e"/></svg><svg class="a" style="left:0;top:0" width="1200" height="130" viewBox="0 0 1200 130"><path d="M1059 93.300L1065 99.500L1061 102L1056.800 96.500Z" fill="#d9d9d9"/><path d="M1045.900 112.200L1048.600 101L1056.700 96.400L1060.800 101.800L1056.700 109.700Z" fill="none" stroke="#6e6e6e" stroke-width="1.900" stroke-linejoin="round"/><path d="M1056.400 96.600L1058.900 92.800M1060.800 101.800L1065.300 99.400" fill="none" stroke="#6e6e6e" stroke-width="1.900" stroke-linecap="round"/><path d="M1046.400 111.600L1053 105" stroke="#6e6e6e" stroke-width="1.200"/><circle cx="1053.300" cy="104.700" r="1.400" fill="#6e6e6e"/><path d="M1058.700 112.200L1061 108.800L1061.800 112L1064 109.300L1064.800 112L1067.400 110.200" fill="none" stroke="#6e6e6e" stroke-width="1.600" stroke-linejoin="round" stroke-linecap="round"/><path d="M1092.700 96.500V92.700H1102.500L1108.300 98.500V101" fill="none" stroke="#6e6e6e" stroke-width="1.900" stroke-linejoin="round"/><path d="M1101.300 93.500V99.700H1107.800" fill="none" stroke="#6e6e6e" stroke-width="1.700"/><rect x="1089.200" y="96.200" width="8.700" height="5.600" rx="1" fill="#6e6e6e"/><path d="M1092.700 104.300V112.200H1098.300" fill="none" stroke="#6e6e6e" stroke-width="1.900" stroke-linejoin="round"/><path d="M1109.800 101.400L1112.600 104.100L1102.600 113.200L1099.400 114.300L1100.200 111Z" fill="#ececec" stroke="#6e6e6e" stroke-width="1.500" stroke-linejoin="round"/><path d="M1100.200 111L1102.600 113.200L1099.400 114.300Z" fill="#6e6e6e"/><path d="M1101.700 112.200L1111.300 102.800" stroke="#6e6e6e" stroke-width="0.900"/></svg><svg class="a" style="left:1746.5px;top:50px" width="22" height="22" viewBox="0 0 22 22" ><circle cx="11" cy="10.600" r="9.400" fill="none" stroke="#6e6e6e" stroke-width="2"/></svg><svg class="a" style="left:1790px;top:51.5px" width="18" height="20" viewBox="0 0 18 20" ><path d="M9 0.600C9.900 0.600 10.400 1.200 10.400 2C13 2.800 14.300 5 14.300 8V12.500L16.800 15.800V16.500H1.200V15.800L3.700 12.500V8C3.700 5 5 2.800 7.600 2C7.600 1.200 8.100 0.600 9 0.600Z" fill="#a3a3a3"/><path d="M6.600 17.600H11.400C11.400 18.800 10.400 19.500 9 19.500C7.600 19.500 6.600 18.800 6.600 17.600Z" fill="#a3a3a3"/></svg><svg class="a" style="left:1820px;top:94px" width="20" height="19" viewBox="0 0 20 19" ><circle cx="6.800" cy="4.800" r="3.800" fill="#fff"/><path d="M0.600 14.500C0.600 10.800 3 8.800 6.800 8.800C9 8.800 10.800 9.500 11.800 10.800C10.500 11.600 9.700 13 9.700 14.500Z" fill="#fff"/><circle cx="14.200" cy="13.600" r="4.600" fill="#fff"/><path d="M14.200 11V16.200M11.600 13.600H16.800" stroke="#2680eb" stroke-width="1.200"/></svg>
<span class="t" style="left:1753.57px;top:54.17px;font-size:13.5px;color:#6e6e6e;font-weight:700;">?</span>
<span class="t" style="left:1838.98px;top:53.66px;font-size:15.4px;color:#3a3a3a;font-weight:700;letter-spacing:0.713px;">Sign In</span>
<span class="t" style="left:1847.11px;top:95.57px;font-size:14.8px;color:#fff;font-weight:700;letter-spacing:0.478px;will-change:transform;">Share</span>
<span class="t" style="left:876.23px;top:96.67px;font-size:12.2px;color:#555;">1</span>
<span class="t" style="left:898.33px;top:96.67px;font-size:12.2px;color:#555;">/</span>
<span class="t" style="left:910.03px;top:96.67px;font-size:12.2px;color:#555;">1</span>
<div class="a" style="left:865px;top:116px;width:28px;height:1px;background:#bdbdbd;"></div>
<div class="a" style="left:936px;top:89px;width:1px;height:28px;background:#cfcfcf;"></div>
<svg class="a" style="left:13px;top:148px" width="22" height="24" viewBox="0 0 22 24" ><path d="M7.600 1.800H14.800L19.600 6.600V16H7.600Z" fill="#fafafa" stroke="#6e6e6e" stroke-width="1.900" stroke-linejoin="round"/><path d="M14.300 2V7H19.400" fill="none" stroke="#6e6e6e" stroke-width="1.500"/><path d="M5 6.500H2.200V21.500H13.600V18.500" fill="none" stroke="#6e6e6e" stroke-width="1.900" stroke-linejoin="round"/><path d="M5.500 18.500H11" stroke="#d0d0d0" stroke-width="1.200"/></svg><svg class="a" style="left:14px;top:195px" width="16" height="24" viewBox="0 0 16 24" ><path d="M2.500 2.500H13.500V21L8 16.200L2.500 21Z" fill="none" stroke="#6e6e6e" stroke-width="1.900" stroke-linejoin="miter"/></svg><svg class="a" style="left:0;top:0" width="60" height="330" viewBox="0 0 60 330"><g transform="translate(21.600 252.200) rotate(-45)"><path d="M8 4.800H-5.300A4.800 4.800 0 0 1 -5.300 -4.800H6.300A3.500 3.500 0 0 1 6.300 2.200H-2.800A2 2 0 0 1 -2.800 -1.800H3" fill="none" stroke="#6e6e6e" stroke-width="1.900" stroke-linecap="round"/></g><path d="M22.400 301.7L32.400 307.2L22.400 312.7L12.400 307.2Z" fill="#fafafa" stroke="#6e6e6e" stroke-width="1.600" stroke-linejoin="round"/><path d="M22.400 296.1L32.400 301.6L22.400 307.1L12.400 301.6Z" fill="#dcdcdc" stroke="#6e6e6e" stroke-width="1.600" stroke-linejoin="round"/><path d="M22.400 290.6L32.400 296.1L22.400 301.6L12.400 296.1Z" fill="#fafafa" stroke="#6e6e6e" stroke-width="1.600" stroke-linejoin="round"/></svg>
<div class="a" style="left:1705px;top:142px;width:198px;height:33px;border:1px solid #cacaca;background:#fff"></div>
<span class="t" style="left:1718.88px;top:153.83px;font-size:13.2px;color:#9a9a9a;letter-spacing:0.106px;">Search 'Measure'</span>
<span class="t" style="left:1749.42px;top:205.44px;font-size:14.6px;color:#444;letter-spacing:0.017px;">Export PDF</span>
<span class="t" style="left:1749.42px;top:250.34px;font-size:14.6px;color:#444;letter-spacing:-0.109px;">Edit PDF</span>
<span class="t" style="left:1749.42px;top:295.14px;font-size:14.6px;color:#444;letter-spacing:-0.006px;">Create PDF</span>
<span class="t" style="left:1749.42px;top:340.24px;font-size:14.6px;color:#444;letter-spacing:0.979px;">Comment</span>
<span class="t" style="left:1749.42px;top:386.39px;font-size:14.6px;color:#444;letter-spacing:0.393px;">Combine Files</span>
<span class="t" style="left:1749.42px;top:432.54px;font-size:14.6px;color:#444;letter-spacing:0.166px;">Organize Pages</span>
<span class="t" style="left:1749.42px;top:478.44px;font-size:14.6px;color:#444;letter-spacing:0.091px;">Redact</span>
<span class="t" style="left:1749.42px;top:524.54px;font-size:14.6px;color:#444;letter-spacing:0.447px;">Protect</span>
<span class="t" style="left:1749.42px;top:570.24px;font-size:14.6px;color:#444;letter-spacing:0.204px;">Compress PDF</span>
<span class="t" style="left:1749.42px;top:616.64px;font-size:14.6px;color:#444;letter-spacing:0.641px;">Fill &amp; Sign</span>
<span class="t" style="left:1749.42px;top:662.24px;font-size:14.6px;color:#444;letter-spacing:0.562px;">Send for Comments</span>
<span class="t" style="left:1749.42px;top:708.44px;font-size:14.6px;color:#444;letter-spacing:0.310px;">More Tools</span>
<svg class="a" style="left:0;top:0;pointer-events:none" width="1920" height="1210" viewBox="0 0 1920 1210"><path d="M1719.3 202.1H1728.6L1732.8 206.29999999999998V218.5Q1732.8 219.7 1731.6 219.7H1719.3Q1718.1 219.7 1718.1 218.5V203.29999999999998Q1718.1 202.1 1719.3 202.1Z" fill="#d3ecec" stroke="#1f8a8c" stroke-width="2" stroke-linejoin="round"/><path d="M1724.21 207.40Q1725.96 210.52 1724.40 211.88Q1722.84 214.22 1720.70 215.20M1724.40 211.88Q1726.55 213.44 1728.50 213.44" fill="none" stroke="#1f8a8c" stroke-width="1.0" stroke-linecap="round"/><circle cx="1733" cy="217.9" r="6.6" fill="#fafafa"/><circle cx="1733" cy="217.9" r="5.9" fill="#1b9093"/><path d="M1729.6 217.9H1735.200M1733.300 215.300L1736.200 217.900L1733.300 220.500" fill="none" stroke="#fff" stroke-width="1.600"/><rect x="1717.300" y="247.200" width="19.600" height="7.400" rx="0.800" fill="#f4d9e8" stroke="#cb2f80" stroke-width="2"/><rect x="1717.300" y="259.300" width="8.300" height="7.500" rx="0.800" fill="#f4d9e8" stroke="#cb2f80" stroke-width="2"/><path d="M1730.200 259.400H1737.900M1730.200 262.500H1737.900M1730.200 265.500H1737.900" stroke="#a8457b" stroke-width="1.100"/><path d="M1719.3 292.1H1728.6L1732.8 296.3V308.50000000000006Q1732.8 309.70000000000005 1731.6 309.70000000000005H1719.3Q1718.1 309.70000000000005 1718.1 308.50000000000006V293.3Q1718.1 292.1 1719.3 292.1Z" fill="#f8dcdd" stroke="#c9414c" stroke-width="2" stroke-linejoin="round"/><path d="M1724.21 297.40Q1725.96 300.52 1724.40 301.88Q1722.84 304.23 1720.70 305.20M1724.40 301.88Q1726.55 303.44 1728.50 303.44" fill="none" stroke="#c9414c" stroke-width="1.0" stroke-linecap="round"/><circle cx="1733" cy="307.90000000000003" r="6.6" fill="#fafafa"/><circle cx="1733" cy="307.90000000000003" r="5.9" fill="#d7373f"/><path d="M1729.800 307.900H1736.200M1733 304.700V311.100" stroke="#fff" stroke-width="1.900"/><path d="M1718.600 337.200H1735.300Q1736.800 337.200 1736.800 338.700V351.300Q1736.800 352.800 1735.300 352.800H1728.600L1723.400 357.600V352.800H1718.600Q1717.100 352.800 1717.100 351.300V338.700Q1717.100 337.200 1718.600 337.200Z" fill="#d8b52c"/><path d="M1720.900 343H1733.100M1720.900 347H1731" stroke="#fff6cf" stroke-width="1.900"/><path d="M1716.200 382.100H1723.500L1727.400 386V395.800H1716.200Z" fill="#fff" stroke="#5c5ce0" stroke-width="2" stroke-linejoin="round"/><path d="M1720.99 385.60Q1722.38 388.08 1721.14 389.16Q1719.90 391.02 1718.20 391.80M1721.14 389.16Q1722.85 390.40 1724.40 390.40" fill="none" stroke="#5c5ce0" stroke-width="0.9" stroke-linecap="round"/><path d="M1727.500 381.100H1734.800L1739 385.300V396.800H1727.500Z" fill="#5c5ce0"/><path d="M1735.300 381.100V384.800H1739Z" fill="#e6e6fa"/><path d="M1723.400 391.200H1729.400V398.300H1733.600L1726.400 406.300L1719.200 398.300H1723.400Z" fill="#fafafa"/><path d="M1725.100 392.500H1727.800V399.400H1731.800L1726.450 404.800L1721.100 399.400H1725.100Z" fill="#5c5ce0"/><rect x="1729" y="430.200" width="7.800" height="17.500" rx="1" fill="#dff0d2" stroke="#6fbe3b" stroke-width="2"/><rect x="1718" y="439" width="8" height="8.700" fill="none" stroke="#7fae58" stroke-width="1.700" stroke-dasharray="2.300 1.500"/><path d="M1717.800 429.600H1725L1722.700 431.900L1726.600 435.800L1724.200 438L1720.300 434.200L1717.800 436.600Z" fill="#6fbe3b"/><g transform="translate(1728.400 483.200) rotate(-44)"><rect x="-10.300" y="-3.100" width="20.600" height="6.200" rx="3" fill="#d83790"/><rect x="-8" y="-1.100" width="15.800" height="2.200" rx="1" fill="#fcd3ea"/></g><path d="M1718.600 489.300L1722.200 493.600H1716.100Z" fill="#d83790"/><path d="M1730.300 488.100H1737.100Q1737.900 488.100 1737.900 488.900V492.800Q1737.900 493.600 1737.100 493.600H1724.800Z" fill="#d83790"/><path d="M1727 521.200C1729.500 522.800 1732.200 523.600 1735 523.800V531.500C1735 536.500 1731.500 540 1727 541.900Z" fill="#fafafa"/><path d="M1727 521.200C1724.500 522.800 1721.800 523.600 1719 523.800V531.500C1719 536.500 1722.500 540 1727 541.900Z" fill="#dddcf6"/><path d="M1727 521.200C1729.500 522.800 1732.200 523.600 1735 523.800V531.500C1735 536.500 1731.500 540 1727 541.900C1722.500 540 1719 536.500 1719 531.500V523.800C1721.800 523.600 1724.500 522.800 1727 521.200Z" fill="none" stroke="#5c5ce0" stroke-width="1.900" stroke-linejoin="round"/><path d="M1721.5 567.8H1730.6000000000001L1734.9 572.0999999999999V584.4000000000001Q1734.9 585.7 1733.6000000000001 585.7H1721.5Q1720.2 585.7 1720.2 584.4000000000001V569.0999999999999Q1720.2 567.8 1721.5 567.8Z" fill="#d3ecec" stroke="#1f8a8c" stroke-width="2" stroke-linejoin="round"/><rect x="1718.500" y="573" width="3.400" height="8" fill="#d3ecec"/><rect x="1733.200" y="573" width="3.400" height="8" fill="#d3ecec"/><path d="M1726.93 573.80Q1728.60 576.76 1727.12 578.05Q1725.63 580.27 1723.60 581.20M1727.12 578.05Q1729.15 579.53 1731.00 579.53" fill="none" stroke="#1f8a8c" stroke-width="1.5" stroke-linecap="round"/><path d="M1716.700 573.900L1720.100 577L1716.700 580.100M1738.500 573.900L1735.100 577L1738.500 580.100" fill="none" stroke="#1f8a8c" stroke-width="1.800" stroke-linecap="round"/><path d="M1730.600 614.200C1731.800 613 1733.600 613.100 1734.700 614.200C1735.800 615.300 1735.800 617 1734.700 618.200L1723 630.200L1716.300 633L1718.800 626.200Z" fill="#e8dcf6" stroke="#9256d9" stroke-width="2" stroke-linejoin="round"/><path d="M1718.800 626.200L1723 630.200L1716.300 633Z" fill="#fafafa" stroke="#9256d9" stroke-width="1.600" stroke-linejoin="round"/><path d="M1723.500 630L1733 620.300" stroke="#9256d9" stroke-width="1.300"/><path d="M1722.500 633.100H1727C1729.500 633 1729.800 628.500 1730.900 628.500C1732 628.500 1731 633 1733 633C1734.500 633 1734.200 629.500 1735.300 629.500C1736.300 629.500 1735.600 632.600 1737 632.600C1737.900 632.600 1738.300 631.200 1738.500 630.300" fill="none" stroke="#9256d9" stroke-width="1.700" stroke-linecap="round" stroke-linejoin="round"/><path d="M1717.400 658.400H1726L1731.700 664V676.600H1717.400Z" fill="#f2ebcb" stroke="#d8b20c" stroke-width="2.200" stroke-linejoin="round"/><path d="M1725.800 658.800V664.200H1731.300" fill="#fafafa" stroke="#d8b20c" stroke-width="1.600" stroke-linejoin="round"/><path d="M1726.700 668H1738.900V678.500H1731.800L1729.300 681V678.500H1726.700Z" fill="#fafafa"/><path d="M1727.600 668.900H1738.100V677.700H1731.600L1729.600 680.200V677.700H1727.600Z" fill="#d8b20c"/><path d="M1730 672H1735.700M1730 674.600H1735.700" stroke="#fff6cf" stroke-width="1.100"/><path d="M1718.600 721L1729.300 710.500" stroke="#6e6e6e" stroke-width="4.200" stroke-linecap="round"/><circle cx="1731" cy="708.700" r="4.900" fill="#6e6e6e"/><path d="M1731.300 708.400L1734.500 702L1737.800 705.300Z" fill="#fafafa"/><path d="M1730.600 704.600L1733.800 701.600L1735.800 703.500L1732.400 706.900Z" fill="#fafafa"/><circle cx="1719" cy="720.600" r="0.900" fill="#fafafa"/><circle cx="1733" cy="720.800" r="6.700" fill="#fafafa"/><circle cx="1733" cy="720.800" r="5.900" fill="#6e6e6e"/><path d="M1729.800 720.800H1736.200M1733 717.600V724" stroke="#fff" stroke-width="1.900"/><path d="M1885.300 210.2L1890.100 215.0L1894.900 210.2" fill="none" stroke="#444" stroke-width="2.100"/><path d="M1885.300 300.20000000000005L1890.100 305.0L1894.900 300.20000000000005" fill="none" stroke="#444" stroke-width="2.100"/></svg>
<div class="a" style="left:1690px;top:861px;width:230px;height:1px;background:#d2d2d2;"></div>
<span class="t" style="left:1750.28px;top:884.63px;font-size:13.2px;color:#444;font-weight:700;letter-spacing:0.774px;">E-Sign Anywhere</span>
<span class="t" style="left:1724.31px;top:921.33px;font-size:12.6px;color:#444;font-weight:700;letter-spacing:0.201px;">Create, edit and sign PDF</span>
<span class="t" style="left:1740.91px;top:935.83px;font-size:12.6px;color:#444;font-weight:700;letter-spacing:0.355px;">forms &amp; agreements</span>
<div class="a" style="left:1730px;top:970px;width:150px;height:40px;border-radius:20px;background:#2680eb"></div>
<span class="t" style="left:1767.94px;top:983.54px;font-size:12px;color:#fff;letter-spacing:-0.427px;will-change:transform;">Start Free Trial</span>
<span class="t" style="left:1254.65px;top:590.56px;font-size:20.6px;color:#2c2c38;letter-spacing:0.820px;">+2,10</span>
<span class="t" style="left:1254.35px;top:688.36px;font-size:20.6px;color:#2c2c38;letter-spacing:0.819px;">+0,80</span>
<span class="t" style="left:1254.35px;top:748.56px;font-size:20.6px;color:#2c2c38;letter-spacing:0.475px;">±0,00</span>
<span class="t" style="left:1254.35px;top:770.56px;font-size:20.6px;color:#2c2c38;letter-spacing:0.632px;">-0,30</span>
<div class="a" style="left:631px;top:970px;width:495px;height:50px;border-radius:5px;background:#1f1f1f"></div>
<div class="a" style="left:817px;top:980px;width:66px;height:30px;background:#191919;"></div>
<span class="t" style="left:825.44px;top:987.74px;font-size:12px;color:#fff;letter-spacing:-0.780px;will-change:transform;">174%</span>
<svg class="a" style="left:0;top:0;pointer-events:none" width="1920" height="1210" viewBox="0 0 1920 1210"><path d="M724.5 982V1008" stroke="#636363" stroke-width="1"/><path d="M938.5 982V1008" stroke="#636363" stroke-width="1"/><path d="M1071.5 982V1008" stroke="#636363" stroke-width="1"/><path d="M652.9 984.200V1001.900L657.400 998.600L660.300 1004.800L662.700 1003.700L659.900 997.600L665.200 996.800Z" fill="#fff"/><path d="M691.900 997.500V988.200Q691.900 986.500 693.550 986.500Q695.200 986.500 695.200 988.200M695.200 995.400V985Q695.200 983.300 697.400 983.300Q699.600 983.300 699.600 985V995.400M699.600 986.700Q699.600 985 701.550 985Q703.500 985 703.500 986.700V995.400M703.500 990Q703.500 988.300 705.550 988.300Q707.600 988.300 707.600 990V998.500C707.600 1003.500 703.500 1006.300 698.500 1006.300C693.500 1006.300 690.500 1003.500 688.500 999.500L686.600 996Q685.900 994.300 687.600 993.800Q688.800 993.600 689.600 994.800L691.900 997.500" fill="none" stroke="#33aaea" stroke-width="1.800" stroke-linejoin="round" stroke-linecap="round"/><circle cx="751.600" cy="994.500" r="9.700" fill="none" stroke="#fff" stroke-width="2"/><path d="M746.400 994.500H756.800" stroke="#fff" stroke-width="2.200"/><circle cx="790.900" cy="994.500" r="9.700" fill="none" stroke="#fff" stroke-width="2"/><path d="M785.700 994.500H796.100M790.900 989.300V999.700" stroke="#fff" stroke-width="2.200"/><path d="M868.700 993.200H876.300L872.500 997.600Z" fill="#fff"/><path d="M909.500 985.100H916.500L920.700 989.300V999.400H909.500Z" fill="none" stroke="#fff" stroke-width="2" stroke-linejoin="round"/><path d="M916 984.600V989.800H921.200Z" fill="#fff"/><path d="M907.500 989.900H904.500V1004.500H915.700V1001.500" fill="none" stroke="#fff" stroke-width="2" stroke-linejoin="round"/><path d="M907 1002H913" stroke="#888" stroke-width="1"/><path d="M958 983V990.300H973.100V983" fill="none" stroke="#33aaea" stroke-width="2"/><path d="M958 1006.800V995.300H967.800L973.100 1000.300V1006.800" fill="none" stroke="#33aaea" stroke-width="2"/><path d="M967.300 995.600V1000.600H972.600" fill="none" stroke="#33aaea" stroke-width="1.500"/><path d="M961 1004.600H970M962.800 1002.400L960.500 1004.600L962.800 1006.800M968.200 1002.400L970.500 1004.600L968.200 1006.800" fill="none" stroke="#33aaea" stroke-width="1.300"/><path d="M997.200 985.100H1008.300L1012.800 989.600V1003.800H997.200Z" fill="none" stroke="#fff" stroke-width="2" stroke-linejoin="round"/><path d="M1007.800 984.800V990.100H1013Z" fill="#fff"/><path d="M1004.500 990.500V1001M999.300 995.700H1009.700" stroke="#fff" stroke-width="1.300"/><path d="M1002.700 992.200L1004.500 989.800L1006.300 992.200ZM1002.700 999.300L1004.500 1001.700L1006.300 999.300ZM1001 993.900L998.600 995.700L1001 997.500ZM1008 993.900L1010.400 995.700L1008 997.500Z" fill="#fff"/><rect x="1035" y="985" width="18" height="19" rx="0.800" fill="none" stroke="#fff" stroke-width="2"/><rect x="1035" y="985" width="18" height="2.300" fill="#fff"/><path d="M1046 988.600H1051.300V993.900L1049.400 992L1046.600 994.800L1044.400 992.600L1047.200 989.800Z" fill="#fff"/><path d="M1036.800 1002.400H1042.100L1040.300 1000.600L1043.100 997.800L1040.900 995.600L1038.100 998.400L1036.800 997.100Z" fill="#fff"/><path d="M1098.900 985.200V994.400M1094.500 989.300L1098.900 984.900L1103.300 989.300" fill="none" stroke="#fff" stroke-width="2.200" stroke-linecap="round" stroke-linejoin="round"/><rect x="1088.900" y="997" width="20.200" height="7" rx="0.800" fill="none" stroke="#fff" stroke-width="2"/><rect x="1092.0" y="999.800" width="1.600" height="1.600" fill="#fff"/><rect x="1096.1" y="999.800" width="1.600" height="1.600" fill="#fff"/><rect x="1100.2" y="999.800" width="1.600" height="1.600" fill="#fff"/><rect x="1104.3" y="999.800" width="1.600" height="1.600" fill="#fff"/></svg>
<div class="a" style="left:0px;top:1040px;width:1920px;height:40px;background:#1d1d1d;"></div>
<div class="a" style="left:48px;top:1040px;width:343px;height:40px;background:#f2f2f2;"></div>
<div class="a" style="left:48px;top:1040px;width:343px;height:1px;background:#d9d9d9;"></div>
<div class="a" style="left:48px;top:1079px;width:343px;height:1px;background:#dcdcdc;"></div>
<span class="t" style="left:87.81px;top:1053.07px;font-size:14.8px;color:#2a2a2a;letter-spacing:0.099px;">Otsimiseks tippige siia</span>
<svg class="a" style="left:0;top:0;pointer-events:none" width="1920" height="1210" viewBox="0 0 1920 1210"><rect x="786" y="1040" width="44" height="40" fill="#4b4b4b"/><rect x="830" y="1040" width="4" height="40" fill="#3a3a3a"/><rect x="447" y="1078" width="39.8" height="2" fill="#8ec5f0"/><rect x="479" y="1078" width="7.8" height="2" fill="#7ba7c9"/><rect x="544.6" y="1078" width="40.2" height="2" fill="#8ec5f0"/><rect x="594" y="1078" width="39.9" height="2" fill="#8ec5f0"/><rect x="643" y="1078" width="39.9" height="2" fill="#8ec5f0"/><rect x="692" y="1078" width="40.2" height="2" fill="#8ec5f0"/><rect x="723.6" y="1078" width="8.6" height="2" fill="#7ba7c9"/><rect x="740.9" y="1078" width="40.1" height="2" fill="#8ec5f0"/><rect x="786" y="1078" width="48.0" height="2" fill="#8ec5f0"/><rect x="830" y="1078" width="4.0" height="2" fill="#7ba7c9"/><rect x="838.6" y="1078" width="40.6" height="2" fill="#8ec5f0"/><rect x="887.8" y="1078" width="40.2" height="2" fill="#8ec5f0"/><path d="M15.600 1053.700L22.800 1052.700V1059.300H15.600ZM23.800 1052.600L32.300 1051.400V1059.300H23.800ZM15.600 1060.300H22.800V1066.900L15.600 1065.900ZM23.800 1060.300H32.300V1068.200L23.800 1067Z" fill="#fff"/><circle cx="71.400" cy="1058" r="4.400" fill="none" stroke="#1e1e1e" stroke-width="1.300"/><path d="M68.200 1061.200L60.400 1067.400" stroke="#1e1e1e" stroke-width="1.300"/><path d="M408.400 1056.500H418.700V1062.300H408.400ZM408.400 1052.100V1054.300H418.700V1052.100M408.400 1067V1064.700H418.700V1067M422.500 1052.100V1055.200M422.500 1060.300V1067" fill="none" stroke="#fff" stroke-width="1.100"/><rect x="421.100" y="1056" width="2.900" height="2.800" fill="#fff"/><path d="M455.900 1051.600Q455.900 1050.900 456.600 1050.900H464.200L465.400 1052.500H476.600Q477.400 1052.500 477.400 1053.300V1067.700H455.900Z" fill="#e9a90a"/><path d="M455.900 1053.600H477.400V1067.700H455.900Z" fill="#ffd866"/><path d="M460.200 1068.900V1062.200Q460.200 1060.700 461.700 1060.700H472Q473.500 1060.700 473.500 1062.200V1068.900H469.700V1064.500H464V1068.900Z" fill="#3b97de"/><path d="M505.200 1052.300L521.500 1051.700L525.100 1052.500V1069.500L521.500 1070L505.200 1069Z" fill="#8cc5ea"/><path d="M521.500 1051.700L525.100 1052.500V1069.500L521.500 1070Z" fill="#b5dcf3"/><circle cx="513.700" cy="1060.500" r="6.700" fill="#f08a24"/><circle cx="513.700" cy="1060.500" r="5.200" fill="#f7a23e"/><path d="M511.300 1056.600L518 1060.500L511.300 1064.400Z" fill="#fff"/><circle cx="564.9" cy="1059.9" r="11.3" fill="#e84b3c"/><path d="M564.9 1059.9L555.11 1054.25A11.3 11.3 0 0 0 561.98 1070.81Z" fill="#2ba456"/><path d="M564.9 1059.9L561.98 1070.81A11.3 11.3 0 0 0 574.69 1054.25Z" fill="#fbc53c"/><path d="M564.9 1059.9L574.69 1054.25A11.3 11.3 0 0 0 555.11 1054.25Z" fill="#e84b3c"/><path d="M555.11 1054.25L560.14 1062.65L561.98 1070.81Z" fill="#2ba456"/><path d="M574.69 1054.25L569.66 1057.15L570.4 1055.1000000000001Z" fill="#e84b3c"/><circle cx="564.9" cy="1059.9" r="5.600" fill="#f4f4f4"/><circle cx="564.9" cy="1059.9" r="4.300" fill="#4c8bf5"/><rect x="609.800" y="1049" width="14.500" height="20.700" rx="1" fill="#1066b5"/><rect x="617" y="1049" width="7.300" height="6.500" fill="#28a8ea"/><rect x="617" y="1055.500" width="7.300" height="6.500" fill="#0f78d4"/><rect x="609.800" y="1055.500" width="7.200" height="6.500" fill="#0a5aa8"/><rect x="620.600" y="1051" width="3.700" height="4.500" fill="#50d9ff"/><rect x="602" y="1053.700" width="12.100" height="12.100" rx="1" fill="#0f6fc8"/><circle cx="608.100" cy="1059.800" r="3.100" fill="none" stroke="#fff" stroke-width="1.700"/><rect x="613" y="1063" width="15" height="11" rx="0.800" fill="#efb36e"/><path d="M614 1064L620.500 1069.500L627 1064" fill="none" stroke="#fff" stroke-width="1.200"/><rect x="650.900" y="1047.800" width="24.200" height="24.200" rx="2" fill="#fff"/><text x="653.300" y="1063.300" font-family="Liberation Sans, sans-serif" font-size="16.800" font-weight="700" fill="#0c2e6b" stroke="#0c2e6b" stroke-width="0.700" letter-spacing="-0.200">iD</text><rect x="653.800" y="1050.400" width="4.400" height="3.900" fill="#e8401c"/><text x="653.200" y="1070" font-family="Liberation Sans, sans-serif" font-size="4.200" font-weight="700" fill="#4a5f8c" textLength="19.500" lengthAdjust="spacingAndGlyphs">DIGIDOC</text><rect x="699.800" y="1047.800" width="24.200" height="24.200" fill="#e2f1e6"/><text x="705" y="1067.700" font-family="Liberation Sans, sans-serif" font-size="23.400" font-weight="700" fill="#1f9c4a" stroke="#1f9c4a" stroke-width="0.600" textLength="15.600" lengthAdjust="spacingAndGlyphs">D</text><defs><linearGradient id="ffg" x1="0.700" y1="0" x2="0.300" y2="1"><stop offset="0" stop-color="#ffe14a"/><stop offset="0.350" stop-color="#ff9a1f"/><stop offset="0.750" stop-color="#ff4a3c"/><stop offset="1" stop-color="#e6268c"/></linearGradient><linearGradient id="acg" x1="0" y1="0" x2="0" y2="1"><stop offset="0" stop-color="#f01414"/><stop offset="1" stop-color="#a50b0b"/></linearGradient></defs><path d="M764.500 1047.700C766 1050.500 768.500 1051.500 770.500 1054.500C772.800 1058 772.800 1063.500 769.500 1067.500C766 1071.500 759 1072.500 754.500 1069.500C749.500 1066 748 1060 750.500 1055C750.800 1053.500 751.500 1052.300 752.800 1051.200C752.800 1052.500 753.300 1053.300 754 1054C756 1052.500 759 1052.500 761.500 1053.800C761.500 1051.500 762.500 1049.300 764.500 1047.700Z" fill="url(#ffg)"/><circle cx="760" cy="1060.800" r="4.600" fill="#7d3bd6"/><path d="M755 1057.800C757.500 1056 761 1055.800 764 1057.500C762 1057.500 760.600 1058.300 760 1059.800C758 1060 756 1059.500 755 1057.800Z" fill="#ff8a1f"/><rect x="799.400" y="1048.200" width="20.700" height="21.100" rx="1" fill="url(#acg)"/><path d="M808.700 1053.300C807.600 1053.300 807.800 1055.800 809 1058.500C810.200 1061.200 813.500 1061.300 815.200 1061.300C816.600 1061.300 816.200 1060.200 814.800 1060C812.800 1059.700 810.500 1060 808 1060.800C805.800 1061.500 803.600 1063 803.300 1064.100C803.100 1065 804.200 1065 805.200 1063.900C806.800 1062.100 808.400 1059.300 809 1057C809.600 1054.800 809.500 1053.300 808.700 1053.300Z" fill="none" stroke="#fff" stroke-width="1.100"/><rect x="853" y="1049" width="18.300" height="21" rx="1" fill="#185c37"/><rect x="853" y="1049" width="9.200" height="5.300" fill="#21a366"/><rect x="862.200" y="1049" width="9.100" height="5.300" fill="#33c481"/><rect x="853" y="1054.300" width="9.200" height="5.200" fill="#107c41"/><rect x="862.200" y="1054.300" width="9.100" height="5.200" fill="#21a366"/><rect x="862.200" y="1059.500" width="9.100" height="5.200" fill="#107c41"/><rect x="846.800" y="1054" width="12.900" height="12.200" rx="1" fill="#107c41"/><text x="849.600" y="1064" font-family="Liberation Sans, sans-serif" font-size="10.800" font-weight="700" fill="#fff">X</text><g transform="rotate(-24 907 1061)"><ellipse cx="907" cy="1061" rx="11.200" ry="7.800" fill="#d3e5f1"/><ellipse cx="900" cy="1064.500" rx="2.400" ry="1.800" fill="#1d1d1d"/></g><circle cx="900" cy="1060.700" r="1.900" fill="#e0483a"/><circle cx="904" cy="1057.500" r="1.900" fill="#6cbf4b"/><circle cx="908.600" cy="1055.600" r="1.900" fill="#f2c53a"/><circle cx="906" cy="1062.600" r="1.700" fill="#1c3a6e"/><path d="M907.300 1071.600L914.600 1054.200" stroke="#e39a4a" stroke-width="1.900" stroke-linecap="round"/><path d="M913.600 1054.800L914.600 1048.600L919.800 1051.800L916 1055.800Z" fill="#e9c08c"/><path d="M1687.100 1062.900L1692.900 1057.100L1698.700 1062.900" fill="none" stroke="#fff" stroke-width="1.200"/><path d="M1709.1 1055.4L1713 1052.9L1716.9 1055.4L1713 1057.9ZM1716.8999999999999 1055.4L1720.8 1052.9L1724.7 1055.4L1720.8 1057.9ZM1709.1 1060.4L1713 1057.9L1716.9 1060.4L1713 1062.9ZM1716.8999999999999 1060.4L1720.8 1057.9L1724.7 1060.4L1720.8 1062.9ZM1713.0 1064.6L1716.9 1062.1999999999998L1720.8000000000002 1064.6L1716.9 1067.0Z" fill="#fff"/><rect x="1738" y="1056.700" width="10" height="7.200" fill="none" stroke="#fff" stroke-width="1.100"/><rect x="1748.400" y="1058.800" width="1" height="3" fill="#fff"/><rect x="1739.500" y="1058.200" width="4.500" height="4.200" fill="#fff"/><path d="M1734.300 1054.500V1056.200M1736.700 1054.500V1056.200M1733.500 1056.500H1737.500V1058.500Q1737.500 1060 1735.500 1060Q1733.500 1060 1733.500 1058.500ZM1735.500 1060V1063.500H1738" fill="none" stroke="#fff" stroke-width="1"/><circle cx="1770.500" cy="1065.600" r="1.500" fill="#fff"/><path d="M1765.600 1065.800A5 5 0 0 1 1770.700 1060.700M1762.800 1065.800A7.800 7.800 0 0 1 1770.700 1057.900" fill="none" stroke="#fff" stroke-width="1.300"/><path d="M1760.200 1065.800A10.500 10.500 0 0 1 1770.700 1055.300" fill="none" stroke="#9a9a9a" stroke-width="1.100"/><path d="M1781.200 1057.300H1783.800L1787.400 1053.700V1065.900L1783.800 1062.300H1781.200Z" fill="none" stroke="#fff" stroke-width="1.100" stroke-linejoin="round"/><path d="M1789.400 1057.200Q1791 1059.800 1789.400 1062.400M1791.600 1055.300Q1794.400 1059.800 1791.600 1064.300" fill="none" stroke="#fff" stroke-width="1.100"/><path d="M1793.900 1053.300Q1797.700 1059.800 1793.900 1066.300" fill="none" stroke="#8a8a8a" stroke-width="1"/><path d="M1879 1052H1895.300V1064.300H1888.500L1886 1067.800V1064.300H1879Z" fill="#fff"/><path d="M1881.500 1055H1892.800M1881.500 1057.700H1892.800M1881.500 1060.400H1888.500" stroke="#1d1d1d" stroke-width="1"/><circle cx="1893.300" cy="1064.800" r="3.200" fill="#1d1d1d"/><circle cx="1893.300" cy="1064.800" r="2.100" fill="none" stroke="#fff" stroke-width="1"/><rect x="1915" y="1040" width="1" height="40" fill="#5a5a5a"/></svg>
<span class="t" style="left:1820.47px;top:1045.33px;font-size:11.3px;color:#fff;letter-spacing:-0.349px;will-change:transform;">10:22</span>
<span class="t" style="left:1807.77px;top:1063.23px;font-size:11.3px;color:#fff;letter-spacing:-0.294px;will-change:transform;">19.06.2020</span>
<div class="a" style="left:0px;top:1080px;width:1920px;height:130px;background:#fff;"></div>
</body></html>
